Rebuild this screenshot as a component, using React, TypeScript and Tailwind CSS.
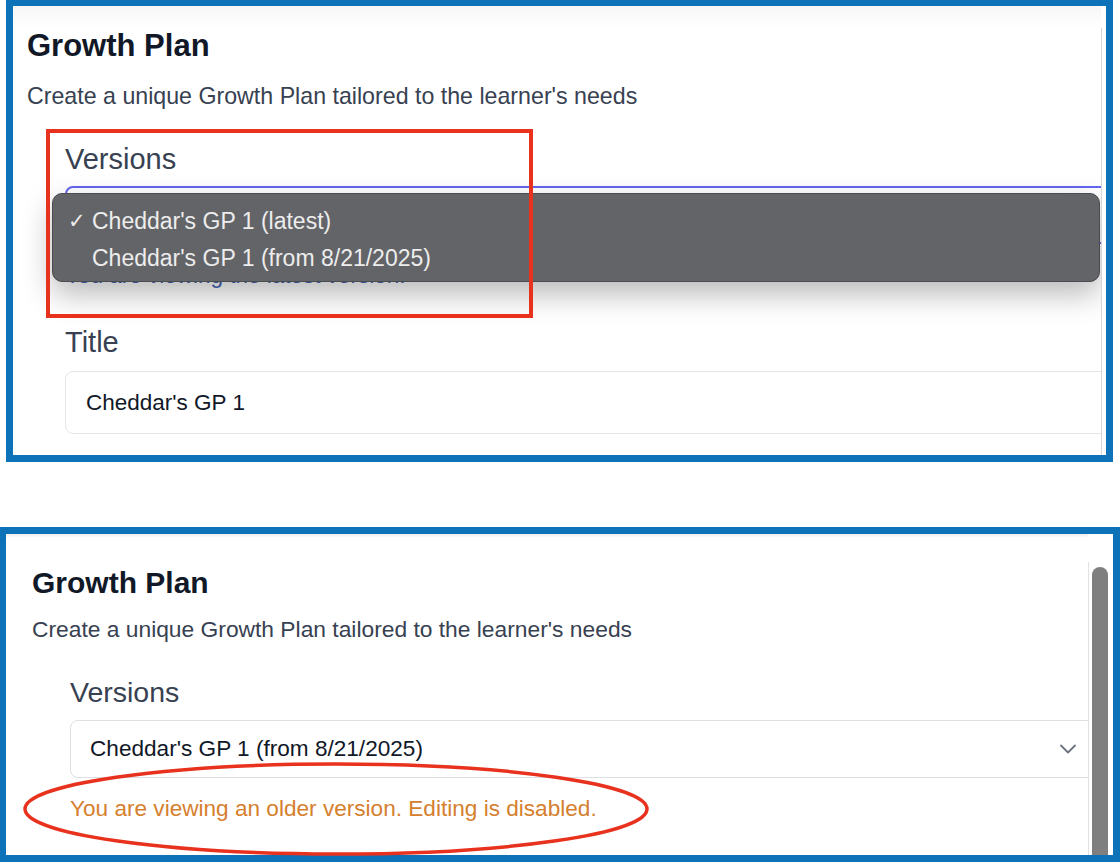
import React from 'react';

// 两张截图拼在一起：上面是版本下拉展开，下面是选中旧版本后的提示
export default function App() {
  return (
    <div className="w-[1120px] h-[862px] bg-white overflow-hidden [font-family:'Liberation_Sans',Arial,sans-serif]">
      {/* 上方截图 */}
      <div className="ml-[6px] w-[1107px] h-[462px] border-[7px] border-t-[6px] border-[#0e72b9] bg-white relative flex">
        <div className="flex-1 overflow-hidden relative pl-[14px] pt-[22px] bg-[linear-gradient(to_bottom,#f7f7f7,#ffffff_22px)]">
          <h1 className="text-[31px] leading-[36px] font-bold text-[#111827]">Growth Plan</h1>
          <p className="mt-[16px] text-[23.2px] leading-[32px] text-[#374151] whitespace-nowrap">
            Create a unique Growth Plan tailored to the learner's needs
          </p>

          <div className="pl-[38px]">
            <div className="mt-[29px] text-[29px] leading-[36px] text-[#374151]">Versions</div>
            <div className="mt-[9px] w-[1060px] h-[58px] rounded-lg border-2 border-[#6366f1] bg-white" />
            <p className="mt-[16px] text-[22.5px] leading-[32px] text-[#3f63b5] whitespace-nowrap">
              You are viewing the latest version.
            </p>

            <div className="mt-[32px] text-[29px] leading-[36px] text-[#374151]">Title</div>
            <div className="mt-[11px] w-[1060px] h-[63px] rounded-lg border border-[#e3e6eb] bg-white flex items-center pl-[20px]">
              <span className="text-[22.5px] text-[#111827]">Cheddar's GP 1</span>
            </div>
          </div>

          {/* 系统原生下拉菜单 */}
          <div className="absolute left-[39px] top-[187px] w-[1048px] h-[89px] rounded-[10px] border border-[#4b4c50] bg-[#636468] pt-[9px] shadow-[0_12px_30px_rgba(0,0,0,0.28)]">
            <div className="h-[37px] flex items-center pl-[15px] text-[23px] text-[#ededed]">
              <span className="w-[24px] [font-family:'DejaVu_Sans',sans-serif] text-[21px] leading-none">✓</span>
              <span>Cheddar's GP 1 (latest)</span>
            </div>
            <div className="h-[37px] flex items-center pl-[39px] text-[23px] text-[#ededed]">
              Cheddar's GP 1 (from 8/21/2025)
            </div>
          </div>

          {/* 标注红框 */}
          <div className="absolute left-[33px] top-[123px] w-[487px] h-[189px] border-4 border-[#e8321e]" />
        </div>
        <div className="w-[5px] mt-[22px] border-l border-[#d6d6d6]" />
      </div>

      {/* 下方截图 */}
      <div className="mt-[65px] w-[1120px] h-[335px] border-[7px] border-l-[6px] border-[#0e72b9] bg-white relative flex">
        <div className="flex-1 overflow-hidden pl-[26px] pt-[31px] bg-[linear-gradient(to_bottom,#eeeeee,#ffffff_4px)]">
          <h1 className="text-[30px] leading-[36px] font-bold text-[#111827]">Growth Plan</h1>
          <p className="mt-[12px] text-[22.8px] leading-[32px] text-[#374151] whitespace-nowrap">
            Create a unique Growth Plan tailored to the learner's needs
          </p>

          <div className="pl-[38px]">
            <div className="mt-[29px] text-[28.5px] leading-[36px] text-[#374151]">Versions</div>
            <div className="mt-[10px] w-[1027px] h-[58px] rounded-lg border border-[#dcdfe4] bg-white flex items-center justify-between pl-[19px] pr-[20px]">
              <span className="text-[22.6px] text-[#111827]">Cheddar's GP 1 (from 8/21/2025)</span>
              <svg width="16" height="10" viewBox="0 0 16 10" fill="none">
                <path d="M1 1.5l7 7 7-7" stroke="#6b7280" strokeWidth="1.8" strokeLinecap="round" strokeLinejoin="round" />
              </svg>
            </div>
            <p className="mt-[15px] text-[22.6px] leading-[32px] text-[#d5802e] whitespace-nowrap">
              You are viewing an older version. Editing is disabled.
            </p>
          </div>
        </div>

        {/* 滚动条 */}
        <div className="w-[25px] pt-[28px] flex">
          <div className="flex-1 border-l border-[#e2e2e2] pt-[5px] pl-[3px]">
            <div className="w-[16px] h-full rounded-t-full bg-[#7f7f7f]" />
          </div>
        </div>

        {/* 标注红圈 */}
        <svg className="absolute left-[17px] top-[228px]" width="626" height="94" viewBox="0 0 626 94" fill="none">
          <ellipse cx="313" cy="47" rx="311" ry="45" stroke="#e8321e" strokeWidth="3.5" />
        </svg>
      </div>
    </div>
  );
}
